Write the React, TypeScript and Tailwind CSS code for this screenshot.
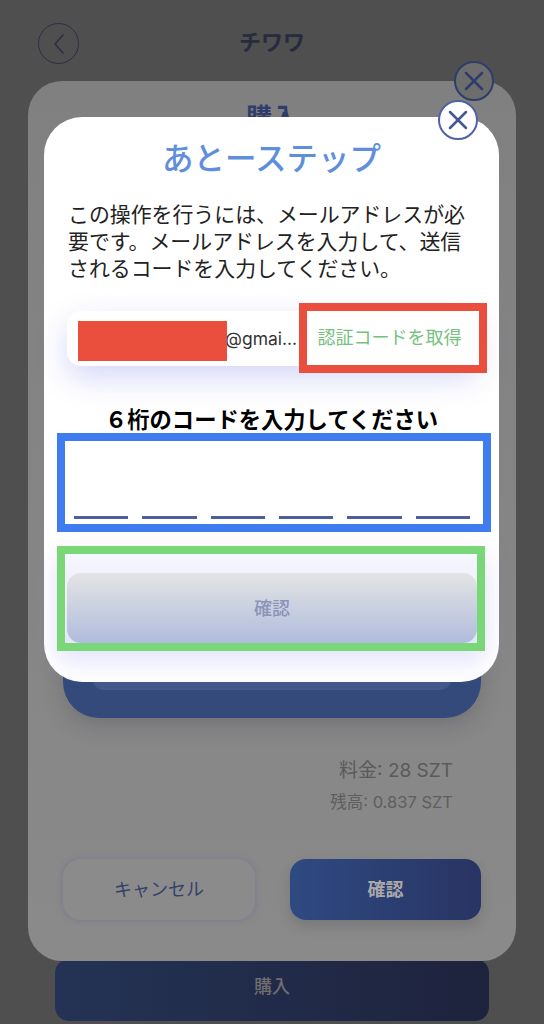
import { X } from "lucide-react";

const App = () => {
  return (
    <div className="relative flex h-[1024px] w-[544px] flex-col overflow-hidden bg-[#4f4f4f] font-['Inter','Noto_Sans_CJK_JP',sans-serif]">
      {/* Page underneath */}
      <header className="flex h-[86px] items-center pl-[38px] pt-[1px]">
        <div className="flex h-[41px] w-[41px] items-center justify-center rounded-full border-[1.5px] border-[#2a2f45]">
          <svg width="14" height="24" viewBox="0 0 14 24" fill="none" stroke="#2a2f45" strokeWidth="1.6" strokeLinecap="round" strokeLinejoin="round">
            <path d="M11 3 L3 12 L11 21" />
          </svg>
        </div>
        <h1 className="ml-[143px] w-[100px] pb-[3px] text-center text-[22px] font-bold text-[#272b3e]">チワワ</h1>
      </header>
      <div className="flex-1" />
      <div className="mx-[55px] mb-[3px] flex h-[62px] items-center justify-center rounded-[14px] bg-gradient-to-r from-[#243355] to-[#1e233d] pb-[8px] text-[18px] font-medium text-[#6e6e6e]">
        購入
      </div>

      {/* Middle dialog */}
      <div className="absolute left-[28px] top-[81px] flex h-[880px] w-[488px] flex-col rounded-[34px] bg-gradient-to-b from-[#808080] to-[#8a8a8a]">
        <h2 className="mt-[19px] text-center text-[26px] font-bold leading-[36px] text-[#2e3d6b]">購入</h2>
        <div className="mx-[35px] mt-[382px] flex h-[200px] items-end rounded-[36px] bg-[#334a7b] px-[30px] pb-[28px] shadow-[0_8px_20px_rgba(60,60,80,0.25)]">
          <div className="h-[40px] w-full rounded-b-[10px] bg-[#45598c]" />
        </div>
        <p className="mr-[63px] mt-[40px] text-right text-[19px] leading-[26px] text-[#5a5a5a]">料金: 28 SZT</p>
        <p className="mr-[63px] mt-[6px] text-right text-[16.5px] leading-[24px] text-[#5e5e5e]">残高: 0.837 SZT</p>
        <div className="mx-[35px] mt-[45px] flex justify-between">
          <button className="flex h-[61px] w-[192px] items-center justify-center rounded-[18px] bg-[#8b8b8b] text-[18px] text-[#35426a] shadow-[0_0_5px_1px_rgba(105,110,150,0.45)]">
            キャンセル
          </button>
          <button className="flex h-[61px] w-[191px] items-center justify-center rounded-[16px] bg-gradient-to-r from-[#2f4a82] to-[#283463] text-[18px] font-bold text-[#a9a9a9] shadow-[0_6px_12px_rgba(60,60,70,0.22)]">
            確認
          </button>
        </div>
      </div>
      <div className="absolute left-[454px] top-[61px] flex h-[40px] w-[40px] items-center justify-center rounded-full border-2 border-[#2f3d6b] bg-[#6d6d6d]">
        <X size={32} strokeWidth={1.9} color="#2f3d6b" />
      </div>

      {/* Front dialog */}
      <div className="absolute left-[44px] top-[117px] w-[455px] rounded-[38px] bg-white pt-[21px] pb-[31px]">
        <h2 className="text-center text-[31.5px] font-medium leading-[41px] text-[#5f8fdc]">あとーステップ</h2>
        <p className="mx-[24px] mt-[22px] text-[20.9px] leading-[27px] text-[#222222]">
          <span className="block whitespace-nowrap">この操作を行うには、メールアドレスが必</span>
          <span className="block whitespace-nowrap">要です。メールアドレスを入力して、送信</span>
          <span className="block whitespace-nowrap">されるコードを入力してください。</span>
        </p>

        <div className="relative ml-[23px] mt-[29px] flex h-[55px] w-[411px] items-center rounded-[14px] bg-white shadow-[0_12px_30px_rgba(130,130,240,0.32)]">
          <span className="ml-[158px] pt-[1px] text-[17.5px] text-[#333333]">@gmai...</span>
          <div className="absolute left-[11px] top-[10px] h-[40px] w-[149px] bg-[#ea4f3d]" />
          <div className="absolute left-[232px] top-[-8px] flex h-[70px] w-[188px] items-center justify-center border-8 border-[#ea4f3d] bg-white pr-[7px] text-[18px] leading-none text-[#77c17e]">
            認証コードを取得
          </div>
        </div>

        <p className="mt-[40px] h-[27px] text-center text-[22.3px] font-bold leading-[27px] text-black">６桁のコードを入力してください</p>

        <div className="ml-[13px] flex h-[99px] w-[434px] items-end gap-[14px] border-8 border-[#3f7cf0] bg-white pb-[5px] pl-[9px] pr-[13px]">
          {[0, 1, 2, 3, 4, 5].map((i) => (
            <div key={i} className="h-[3px] flex-1 bg-[#4d5f9d]" />
          ))}
        </div>

        <div className="ml-[13px] mt-[14px] h-[105px] w-[428px] border-8 border-[#79d778] bg-gradient-to-b from-[#f6f6ff] to-[#e6e6fb] pl-[2px] pt-[19px] shadow-[0_10px_24px_rgba(150,150,245,0.28)]">
          <button className="flex h-[70px] w-full items-center justify-center rounded-[14px] bg-gradient-to-b from-[#e4e4e4] to-[#b0bcdc] text-[18px] font-medium text-[#8a93b8]">
            確認
          </button>
        </div>
      </div>
      <div className="absolute left-[438px] top-[100px] flex h-[40px] w-[40px] items-center justify-center rounded-full border-2 border-[#4f62a6] bg-white">
        <X size={32} strokeWidth={1.9} color="#45588f" />
      </div>
    </div>
  );
};

export default App;
